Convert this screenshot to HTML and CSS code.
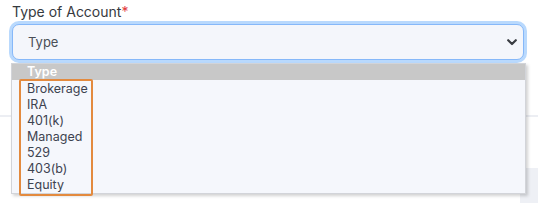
FILE: index.html
```html
<!DOCTYPE html>
<html lang="en">
<head>
    <meta charset="UTF-8">
    <title>Type of Account</title>
    <link rel="stylesheet" href="styles.css">
</head>
<body>
    <div class="form-group">
        <label class="field-label">Type of Account<span class="req">*</span></label>
        <div class="select-box">
            <span class="select-value">Type</span>
            <svg class="chevron" width="10" height="7" viewBox="0 0 10 7">
                <path d="M1.2 1.2 L5 5 L8.8 1.2" fill="none" stroke="#3a3d42" stroke-width="2.2" stroke-linecap="round" stroke-linejoin="round"/>
            </svg>
        </div>
        <div class="divider"></div>
        <div class="next-card"></div>

        <!-- lista aberta do select -->
        <ul class="dropdown">
            <li class="option selected">Type</li>
            <li class="option-group">
                <span class="option">Brokerage</span>
                <span class="option">IRA</span>
                <span class="option">401(k)</span>
                <span class="option">Managed</span>
                <span class="option">529</span>
                <span class="option">403(b)</span>
                <span class="option">Equity</span>
            </li>
        </ul>
    </div>
</body>
</html>
```

FILE: styles.css
```css
body {
    margin: 0;
    background-color: #fff;
    font-family: Inter, "Noto Sans", sans-serif;
    color: #333;
}

.form-group {
    position: relative;
    height: 203px;
    padding-top: 3px;
    box-sizing: border-box;
}

.field-label {
    display: block;
    margin-left: 12px;
    font-size: 14px;
    line-height: 18px;
    color: #363a40;
}

.req {
    color: #e23a3a;
}

.select-box {
    display: flex;
    align-items: center;
    justify-content: space-between;
    margin: 3px 14px 0 12px;
    height: 36px;
    padding: 0 6px 0 15px;
    background-color: #f4f6fb;
    border: 1px solid #86b8f9;
    border-radius: 7px;
    box-shadow: 0 0 0 3px #b9d9fd;
    box-sizing: border-box;
}

.select-value {
    font-size: 13px;
    color: #4a4f57;
}

.chevron {
    display: block;
}

.divider {
    margin-top: 55px;
    height: 2px;
    background-color: #eceef3;
}

.next-card {
    margin-top: 51px;
    margin-left: 520px;
    height: 40px;
    background-color: #eef0f5;
}

.dropdown {
    position: absolute;
    top: 63px;
    left: 11px;
    width: 515px;
    height: 131px;
    margin: 0;
    padding: 0;
    list-style: none;
    background-color: #f5f7fc;
    border: 1px solid #d2d4d9;
    box-shadow: 2px 2px 3px rgba(0, 0, 0, 0.18);
    box-sizing: border-box;
    font-size: 12.5px;
    line-height: 16px;
}

.option {
    display: block;
    padding-left: 15px;
    color: #3d4350;
}

.option.selected {
    background-color: #c8c8c8;
    color: #fff;
    font-weight: 600;
}

.option-group {
    display: inline-block;
    margin: -1px 0 0 7px;
    padding: 0 0 1px;
    width: 70px;
    border: 2px solid #e38a3e;
    border-radius: 2px;
}

.option-group .option {
    padding-left: 6px;
}
```
